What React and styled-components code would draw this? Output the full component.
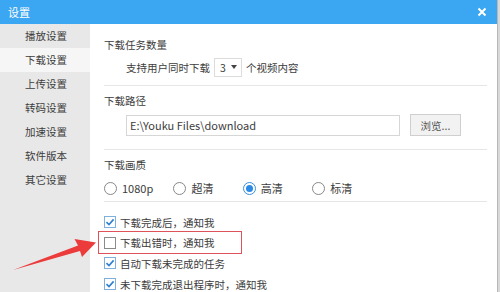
import React from "react";
import styled, { createGlobalStyle } from "styled-components";

const GlobalStyle = createGlobalStyle`
  html, body {
    margin: 0;
    padding: 0;
    background: #d8d8d8;
  }
  body {
    font-family: "Noto Sans CJK SC", "Noto Sans", sans-serif;
    color: #3c3c3c;
  }
`;

const Screen = styled.div`
  width: 500px;
  height: 292px;
  display: flex;
  overflow: hidden;
  position: relative;
`;

const Window = styled.div`
  width: 497px;
  height: 292px;
  display: flex;
  flex-direction: column;
  background: #fff;
  border-right: 1px solid #b8b8b8;
`;

const TitleBar = styled.div`
  height: 24px;
  flex: none;
  background: #3ba6f2;
  display: flex;
  align-items: center;
  justify-content: space-between;
  padding: 0 8px;
  color: #fff;
  font-size: 11px;
`;

const CloseButton = styled.div`
  width: 12px;
  height: 12px;
  display: flex;
  align-items: center;
  justify-content: center;
  margin-right: 1px;
`;

const Body = styled.div`
  flex: 1;
  display: flex;
  min-height: 0;
`;

const Sidebar = styled.div`
  width: 90px;
  flex: none;
  background: #e8e8e8;
  display: flex;
  flex-direction: column;
`;

const NavItem = styled.div`
  height: 24px;
  line-height: 24px;
  padding-left: 25px;
  font-size: 10.5px;
  background: ${(p) => (p.active ? "#f6f6f6" : "transparent")};
`;

const Content = styled.div`
  flex: 1;
  padding: 0 10px 0 14px;
  display: flex;
  flex-direction: column;
`;

const Section = styled.div`
  display: flex;
  flex-direction: column;
  gap: ${(p) => p.gap}px;
  padding: ${(p) => p.pad};
  border-bottom: 1px solid #e6e6e6;
`;

const Heading = styled.div`
  height: 18px;
  line-height: 18px;
  font-size: 10.5px;
`;

const Row = styled.div`
  display: flex;
  align-items: center;
  height: ${(p) => p.h || 20}px;
  font-size: 10.5px;
  padding-left: ${(p) => p.indent || 0}px;
`;

const Select = styled.div`
  width: 28px;
  height: 19px;
  margin: 0 4px;
  border: 1px solid #dcdcdc;
  display: flex;
  align-items: center;
  justify-content: space-between;
  padding: 0 4px 0 5px;
  box-sizing: border-box;
  font-size: 10.5px;
`;

const Caret = styled.span`
  width: 0;
  height: 0;
  border-left: 3.5px solid transparent;
  border-right: 3.5px solid transparent;
  border-top: 4px solid #444;
`;

const PathInput = styled.div`
  width: 274px;
  height: 21px;
  box-sizing: border-box;
  border: 1px solid #d6d6d6;
  display: flex;
  align-items: center;
  padding-left: 3px;
  font-size: 11px;
`;

const BrowseButton = styled.div`
  margin-left: 10px;
  width: 51px;
  height: 22px;
  box-sizing: border-box;
  border: 1px solid #cfcfcf;
  background: #f2f2f2;
  display: flex;
  align-items: center;
  justify-content: center;
  font-size: 10.5px;
  color: #555;
`;

const RadioOption = styled.div`
  width: 69.4px;
  flex: none;
  display: flex;
  align-items: center;
  gap: 5px;
  font-size: 11px;
`;

const RadioCircle = styled.span`
  width: 13px;
  height: 13px;
  box-sizing: border-box;
  border-radius: 50%;
  border: 1px solid ${(p) => (p.checked ? "#3b8fd9" : "#888")};
  display: flex;
  align-items: center;
  justify-content: center;
  &::after {
    content: "";
    width: 7px;
    height: 7px;
    border-radius: 50%;
    background: ${(p) => (p.checked ? "#2b8ae6" : "transparent")};
  }
`;

const CheckList = styled.div`
  display: flex;
  flex-direction: column;
  padding-top: 10px;
`;

const CheckRow = styled.div`
  position: relative;
  align-self: flex-start;
  display: flex;
  align-items: center;
  gap: 4px;
  height: 20.6px;
  font-size: 10.5px;
  ${(p) =>
    p.marked &&
    `
    &::after {
      content: "";
      position: absolute;
      left: -6px;
      right: -27px;
      top: -1.5px;
      bottom: -0.5px;
      border: 1px solid #e0525a;
    }
  `}
`;

const Box = styled.span`
  width: 12px;
  height: 12px;
  box-sizing: border-box;
  border: 1px solid ${(p) => (p.checked ? "#7fb0dc" : "#8a8a8a")};
  background: #fff;
  display: flex;
  align-items: center;
  justify-content: center;
`;

const Arrow = styled.svg`
  position: absolute;
  left: 0;
  top: 0;
  pointer-events: none;
`;

const navItems = ["播放设置", "下载设置", "上传设置", "转码设置", "加速设置", "软件版本", "其它设置"];
const qualities = [
  { label: "1080p", checked: false },
  { label: "超清", checked: false },
  { label: "高清", checked: true },
  { label: "标清", checked: false },
];
const notices = [
  { label: "下载完成后，通知我", checked: true },
  { label: "下载出错时，通知我", checked: false, marked: true },
  { label: "自动下载未完成的任务", checked: true },
  { label: "未下载完成退出程序时，通知我", checked: true },
];

const Check = () => (
  <svg width="10" height="10" viewBox="0 0 10 10">
    <path d="M1.5 5.2 L4 7.6 L8.6 2.4" fill="none" stroke="#2f7fd0" strokeWidth="1.6" />
  </svg>
);

export default function App() {
  return (
    <Screen>
      <GlobalStyle />
      <Window>
        <TitleBar>
          <span>设置</span>
          <CloseButton>
            <svg width="10" height="10" viewBox="0 0 10 10">
              <path d="M1.5 1.5 L8.5 8.5 M8.5 1.5 L1.5 8.5" stroke="#fff" strokeWidth="2" />
            </svg>
          </CloseButton>
        </TitleBar>
        <Body>
          <Sidebar>
            {navItems.map((n) => (
              <NavItem key={n} active={n === "下载设置"}>
                {n}
              </NavItem>
            ))}
          </Sidebar>
          <Content>
            <Section gap={3} pad="12px 0 8px">
              <Heading>下载任务数量</Heading>
              <Row indent={22}>
                支持用户同时下载
                <Select>
                  3<Caret />
                </Select>
                个视频内容
              </Row>
            </Section>
            <Section gap={4} pad="6px 0 13px">
              <Heading>下载路径</Heading>
              <Row h={22} indent={22}>
                <PathInput>E:\Youku Files\download</PathInput>
                <BrowseButton>浏览...</BrowseButton>
              </Row>
            </Section>
            <Section gap={5} pad="6px 0 4px">
              <Heading>下载画质</Heading>
              <Row h={18}>
                {qualities.map((q) => (
                  <RadioOption key={q.label}>
                    <RadioCircle checked={q.checked} />
                    {q.label}
                  </RadioOption>
                ))}
              </Row>
            </Section>
            <CheckList>
              {notices.map((c) => (
                <CheckRow key={c.label} marked={c.marked}>
                  <Box checked={c.checked}>{c.checked && <Check />}</Box>
                  {c.label}
                </CheckRow>
              ))}
            </CheckList>
          </Content>
        </Body>
      </Window>
      <Arrow width="500" height="292" viewBox="0 0 500 292">
        <polygon
          points="13,270 78,245.5 74.5,239 96,242.5 82,257 80,251"
          fill="#ec3b3b"
        />
      </Arrow>
    </Screen>
  );
}
